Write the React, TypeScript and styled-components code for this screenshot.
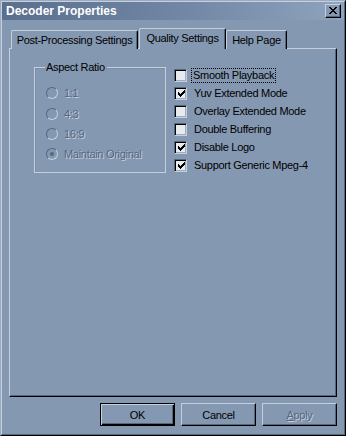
import React from 'react';
import styled, { createGlobalStyle } from 'styled-components';

const C = {
  face: '#8598b2',
  hi: '#c6d0dd',
  light: '#9aabc2',
  shadow: '#55677f',
  dark: '#000000',
  field: '#e7eaef',
};

const Global = createGlobalStyle`
  html, body { margin: 0; padding: 0; background: ${C.face}; }
  body {
    font-family: "Liberation Sans", Arial, sans-serif;
    font-size: 11px;
    letter-spacing: -0.3px;
    color: #000;
  }
  * { box-sizing: border-box; }
`;

const Window = styled.div`
  width: 346px;
  height: 436px;
  border: 1px solid;
  border-color: ${C.light} ${C.dark} ${C.dark} ${C.light};
  background: ${C.face};
`;

const Frame = styled.div`
  height: 100%;
  border: 1px solid;
  border-color: ${C.hi} ${C.shadow} ${C.shadow} ${C.hi};
  display: flex;
  flex-direction: column;
`;

const TitleBar = styled.div`
  height: 18px;
  flex: none;
  display: flex;
  align-items: center;
  justify-content: space-between;
  padding: 0 3px 0 4px;
  background: linear-gradient(90deg, #5a6e8e 0%, #7288a6 55%, #8ea3bd 100%);
  color: #fff;
  font-weight: bold;
  font-size: 12px;
  letter-spacing: 0;
`;

const CloseButton = styled.div`
  width: 16px;
  height: 14px;
  background: ${C.face};
  border: 1px solid;
  border-color: ${C.hi} ${C.dark} ${C.dark} ${C.hi};
  box-shadow: inset -1px -1px 0 ${C.shadow};
  display: flex;
  align-items: center;
  justify-content: center;
  padding: 0 1px 1px 0;
`;

const TabRow = styled.div`
  display: flex;
  align-items: flex-end;
  height: 21px;
  flex: none;
  margin: 8px 0 -1px 9px;
`;

const Tab = styled.div<{ $active?: boolean; $w: number }>`
  width: ${(p) => p.$w}px;
  height: ${(p) => (p.$active ? 21 : 19)}px;
  margin-left: ${(p) => (p.$active ? 1 : 0)}px;
  position: relative;
  z-index: ${(p) => (p.$active ? 2 : 0)};
  background: ${C.face};
  border-top: 1px solid ${C.hi};
  border-left: 1px solid ${C.hi};
  border-right: 1px solid ${C.dark};
  border-top-left-radius: 2px;
  border-top-right-radius: 2px;
  box-shadow: inset -1px 0 0 ${C.shadow};
  display: flex;
  align-items: center;
  justify-content: center;
  padding-bottom: ${(p) => (p.$active ? 2 : 0)}px;
  white-space: nowrap;
`;

const Panel = styled.div`
  margin: 0 7px;
  height: 349px;
  flex: none;
  border: 1px solid;
  border-color: ${C.hi} ${C.dark} ${C.dark} ${C.hi};
  box-shadow: inset -1px -1px 0 ${C.shadow};
  display: flex;
  align-items: flex-start;
  gap: 8px;
  padding: 17px 0 0 24px;
`;

const GroupBox = styled.div`
  position: relative;
  margin-top: 1px;
  width: 132px;
  height: 106px;
  border: 1px solid ${C.hi};
  box-shadow: inset 1px 1px 0 #7b8ea8;
  display: flex;
  flex-direction: column;
  padding: 15px 0 0 11px;
`;

const GroupCaption = styled.span`
  position: absolute;
  top: -7px;
  left: 10px;
  padding: 0 2px 0 1px;
  background: ${C.face};
  line-height: 13px;
`;

const RadioRow = styled.div`
  height: 20.4px;
  display: flex;
  align-items: center;
  gap: 6px;
`;

const RadioCircle = styled.span<{ $checked?: boolean }>`
  width: 12px;
  height: 12px;
  flex: none;
  border-radius: 50%;
  border: 1px solid;
  border-color: ${C.shadow} ${C.hi} ${C.hi} ${C.shadow};
  background: ${C.face};
  display: flex;
  align-items: center;
  justify-content: center;
  &::after {
    content: '';
    display: ${(p) => (p.$checked ? 'block' : 'none')};
    width: 4px;
    height: 4px;
    border-radius: 50%;
    background: ${C.shadow};
  }
`;

const DisabledText = styled.span`
  color: ${C.shadow};
  text-shadow: 1px 1px 0 ${C.hi};
`;

const CheckList = styled.div`
  display: flex;
  flex-direction: column;
`;

const CheckRow = styled.div`
  height: 18px;
  display: flex;
  align-items: center;
  gap: 5px;
`;

const Box = styled.span`
  width: 13px;
  height: 13px;
  flex: none;
  border: 1px solid;
  border-color: ${C.shadow} ${C.hi} ${C.hi} ${C.shadow};
  box-shadow: inset 1px 1px 0 ${C.dark}, inset -1px -1px 0 ${C.light};
  background: ${C.field};
  display: flex;
  align-items: center;
  justify-content: center;
  padding: 1px 0 0 1px;
`;

const Label = styled.span<{ $focus?: boolean }>`
  display: inline-block;
  line-height: 13px;
  padding: 0 1px;
  margin-left: ${(p) => (p.$focus ? 0 : 1)}px;
  outline: ${(p) => (p.$focus ? `1px dotted ${C.dark}` : 'none')};
`;

const ButtonRow = styled.div`
  display: flex;
  justify-content: flex-end;
  gap: 6px;
  margin-top: 6px;
  padding-right: 7px;
`;

const Button = styled.div<{ $default?: boolean; $disabled?: boolean }>`
  width: 75px;
  height: 23px;
  background: ${C.face};
  border: 1px solid;
  border-color: ${(p) => (p.$default ? C.dark : `${C.hi} ${C.dark} ${C.dark} ${C.hi}`)};
  box-shadow: ${(p) =>
    p.$default
      ? `inset 1px 1px 0 ${C.hi}, inset -1px -1px 0 ${C.dark}, inset -2px -2px 0 ${C.shadow}`
      : `inset -1px -1px 0 ${C.shadow}`};
  display: flex;
  align-items: center;
  justify-content: center;
  color: ${(p) => (p.$disabled ? C.shadow : '#000')};
  text-shadow: ${(p) => (p.$disabled ? `1px 1px 0 ${C.hi}` : 'none')};
`;

const Accel = styled.span`
  text-decoration: underline;
`;

const CheckMark = () => (
  <svg width="7" height="7" viewBox="0 0 7 7" shapeRendering="crispEdges">
    <path
      fill="#000"
      d="M6 0h1v1h-1z M5 1h2v1h-2z M0 2h1v1h-1z M4 2h3v1h-3z M0 3h2v1h-2z M3 3h3v1h-3z M0 4h5v1h-5z M1 5h3v1h-3z M2 6h1v1h-1z"
    />
  </svg>
);

const CloseGlyph = () => (
  <svg width="8" height="7" viewBox="0 0 8 7" shapeRendering="crispEdges">
    <path
      fill="#000"
      d="M0 0h2v1h-2z M6 0h2v1h-2z M1 1h2v1h-2z M5 1h2v1h-2z M2 2h4v1h-4z M3 3h2v1h-2z M2 4h4v1h-4z M1 5h2v1h-2z M5 5h2v1h-2z M0 6h2v1h-2z M6 6h2v1h-2z"
    />
  </svg>
);

const radios = [
  { label: '1:1', checked: false },
  { label: '4:3', checked: false },
  { label: '16:9', checked: false },
  { label: 'Maintain Original', checked: true },
];

const checks = [
  { label: 'Smooth Playback', checked: false, focus: true },
  { label: 'Yuv Extended Mode', checked: true },
  { label: 'Overlay Extended Mode', checked: false },
  { label: 'Double Buffering', checked: false },
  { label: 'Disable Logo', checked: true },
  { label: 'Support Generic Mpeg-4', checked: true },
];

export default function App() {
  return (
    <>
      <Global />
      <Window>
        <Frame>
          <TitleBar>
            <span>Decoder Properties</span>
            <CloseButton>
              <CloseGlyph />
            </CloseButton>
          </TitleBar>
          <TabRow>
            <Tab $w={127}>Post-Processing Settings</Tab>
            <Tab $w={87} $active>
              Quality Settings
            </Tab>
            <Tab $w={61}>Help Page</Tab>
          </TabRow>
          <Panel>
            <GroupBox>
              <GroupCaption>Aspect Ratio</GroupCaption>
              {radios.map((r) => (
                <RadioRow key={r.label}>
                  <RadioCircle $checked={r.checked} />
                  <DisabledText>{r.label}</DisabledText>
                </RadioRow>
              ))}
            </GroupBox>
            <CheckList>
              {checks.map((c) => (
                <CheckRow key={c.label}>
                  <Box>{c.checked && <CheckMark />}</Box>
                  <Label $focus={c.focus}>{c.label}</Label>
                </CheckRow>
              ))}
            </CheckList>
          </Panel>
          <ButtonRow>
            <Button $default>OK</Button>
            <Button>Cancel</Button>
            <Button $disabled>
              <Accel>A</Accel>pply
            </Button>
          </ButtonRow>
        </Frame>
      </Window>
    </>
  );
}
